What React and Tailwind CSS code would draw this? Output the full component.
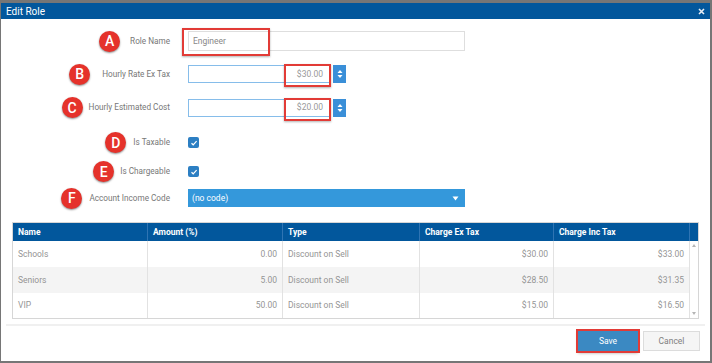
import React from "react";

const Badge = ({ letter }) => (
    <span className="w-[21px] h-[21px] shrink-0 rounded-full bg-[#e5322b] text-white flex items-center justify-center text-[14px] font-medium leading-none shadow-[0_1px_2px_rgba(0,0,0,0.45)]">
        {letter}
    </span>
);

const Label = ({ letter, text, gap = "gap-2" }) => (
    <div className={`w-[169px] flex items-center justify-end ${gap}`}>
        <Badge letter={letter} />
        <span className="text-[8.2px] text-[#777]">{text}</span>
    </div>
);

const Check = () => (
    <span className="w-[11px] h-[11px] rounded-[2px] bg-[#2c7fc3] flex items-center justify-center">
        <svg width="8" height="8" viewBox="0 0 8 8">
            <polyline points="1.5,4.2 3.2,5.8 6.6,2.2" fill="none" stroke="white" strokeWidth="1.2" />
        </svg>
    </span>
);

const Spinner = () => (
    <span className="w-[13px] h-[18px] bg-[#3a8fd8] flex items-center justify-center">
        <svg width="6" height="10" viewBox="0 0 6 10">
            <polygon points="3,1 5.5,4 0.5,4" fill="white" />
            <polygon points="3,9 5.5,6 0.5,6" fill="white" />
        </svg>
    </span>
);

const MoneyInput = ({ value }) => (
    <div className="flex items-center gap-[2px]">
        <div className="relative w-[143px] h-[18px] border border-[#86bdea] bg-white flex items-center justify-end pr-[7px]">
            <span className="text-[8.5px] text-[#999]">{value}</span>
            {/* annotation box */}
            <span className="absolute -top-[2px] right-[-1px] w-[47px] h-[23px] border-2 border-[#e23b36] shadow-[0_1px_2px_rgba(0,0,0,0.3)]" />
        </div>
        <Spinner />
    </div>
);

const rows = [
    { name: "Schools", amount: "0.00", type: "Discount on Sell", ex: "$30.00", inc: "$33.00", bg: "bg-white", h: "h-[26px]" },
    { name: "Seniors", amount: "5.00", type: "Discount on Sell", ex: "$28.50", inc: "$31.35", bg: "bg-[#f4f4f4]", h: "h-[26px]" },
    { name: "VIP", amount: "50.00", type: "Discount on Sell", ex: "$15.00", inc: "$16.50", bg: "bg-white", h: "h-[25px]" },
];

const cols = "grid grid-cols-[135px_135px_137px_134px_136px_8px]";

export default function App() {
    return (
        <div className="w-[712px] h-[363px] bg-[#767676] pt-[3px] pl-px font-['Roboto',sans-serif]">
            <div className="w-[709px] h-[358px] bg-white flex flex-col">

                {/* TITLE BAR */}
                <div className="h-[16px] bg-[#02579c] flex items-center justify-between pl-[5px] pr-[5px]">
                    <span className="text-[10px] text-white">Edit Role</span>
                    <svg width="7" height="7" viewBox="0 0 7 7">
                        <path d="M1 1L6 6M6 1L1 6" stroke="#e8eef5" strokeWidth="1.6" />
                    </svg>
                </div>

                {/* FORM */}
                <div className="pt-[5px] flex flex-col">
                    <div className="h-[34px] flex items-center gap-[18px]">
                        <Label letter="A" text="Role Name" gap="gap-[10px]" />
                        <div className="relative w-[277px] h-[20px] border border-[#dedede] flex items-center pl-[4px]">
                            <span className="text-[8.5px] text-[#888]">Engineer</span>
                            <span className="absolute -top-[4px] -left-[7px] w-[88px] h-[28px] border-2 border-[#e23b36] shadow-[0_1px_2px_rgba(0,0,0,0.3)]" />
                        </div>
                    </div>

                    <div className="h-[32px] flex items-center gap-[18px]">
                        <Label letter="B" text="Hourly Rate Ex Tax" gap="gap-3" />
                        <MoneyInput value="$30.00" />
                    </div>

                    <div className="h-[35px] flex items-center gap-[18px]">
                        <Label letter="C" text="Hourly Estimated Cost" gap="gap-[6px]" />
                        <MoneyInput value="$20.00" />
                    </div>

                    <div className="h-[35px] flex items-center gap-[18px]">
                        <Label letter="D" text="Is Taxable" gap="gap-[7px]" />
                        <Check />
                    </div>

                    <div className="h-[23px] flex items-center gap-[18px]">
                        <Label letter="E" text="Is Chargeable" gap="gap-[6px]" />
                        <Check />
                    </div>

                    <div className="h-[30px] flex items-center gap-[18px]">
                        <Label letter="F" text="Account Income Code" gap="gap-[7px]" />
                        <div className="w-[277px] h-[18px] bg-[#3498db] flex items-center justify-between pl-[4px] pr-[6px]">
                            <span className="text-[8.5px] text-white">(no code)</span>
                            <svg width="7" height="5" viewBox="0 0 7 5">
                                <polygon points="0.5,0.5 6.5,0.5 3.5,4.5" fill="white" />
                            </svg>
                        </div>
                    </div>
                </div>

                {/* TABLE */}
                <div className="mt-[9px] ml-[11px] w-[687px] border border-[#d6d6d6]">
                    <div className={`${cols} h-[18px] bg-[#02579c] text-white text-[8.5px] font-bold`}>
                        <div className="flex items-center pl-[5px] border-r border-[#2f74b3]">Name</div>
                        <div className="flex items-center pl-[5px] border-r border-[#2f74b3]">Amount (%)</div>
                        <div className="flex items-center pl-[5px] border-r border-[#2f74b3]">Type</div>
                        <div className="flex items-center pl-[5px] border-r border-[#2f74b3]">Charge Ex Tax</div>
                        <div className="flex items-center pl-[5px] border-r border-[#2f74b3]">Charge Inc Tax</div>
                        <div />
                    </div>
                    <div className="relative">
                        {rows.map((r) => (
                            <div key={r.name} className={`${cols} ${r.h} ${r.bg} text-[8.5px] text-[#959595]`}>
                                <div className="flex items-center pl-[5px] border-r border-[#e2e2e2]">{r.name}</div>
                                <div className="flex items-center justify-end pr-[5px] border-r border-[#e2e2e2]">{r.amount}</div>
                                <div className="flex items-center pl-[5px] border-r border-[#e2e2e2]">{r.type}</div>
                                <div className="flex items-center justify-end pr-[5px] border-r border-[#e2e2e2]">{r.ex}</div>
                                <div className="flex items-center justify-end pr-[5px] border-r border-[#e2e2e2]">{r.inc}</div>
                                <div className="bg-white" />
                            </div>
                        ))}
                        {/* scrollbar arrows */}
                        <svg className="absolute top-[3px] right-[2px]" width="4" height="3" viewBox="0 0 4 3">
                            <polygon points="2,0 4,3 0,3" fill="#b5b5b5" />
                        </svg>
                        <svg className="absolute bottom-[3px] right-[2px]" width="4" height="3" viewBox="0 0 4 3">
                            <polygon points="0,0 4,0 2,3" fill="#b5b5b5" />
                        </svg>
                    </div>
                </div>

                {/* FOOTER */}
                <div className="mt-[5px] mx-[5px] h-[2px] bg-[#f0f0f0]" />
                <div className="mt-[5px] flex justify-end gap-[5px] pr-[10px]">
                    <button className="w-[60px] h-[20px] bg-[#3b89c2] text-white text-[8.5px] outline-2 outline-[#e23b36] shadow-[0_2px_3px_rgba(0,0,0,0.35)]">
                        Save
                    </button>
                    <button className="w-[57px] h-[20px] bg-[#f5f5f5] border border-[#dcdcdc] text-[#808080] text-[8.5px]">
                        Cancel
                    </button>
                </div>
            </div>
        </div>
    );
}
